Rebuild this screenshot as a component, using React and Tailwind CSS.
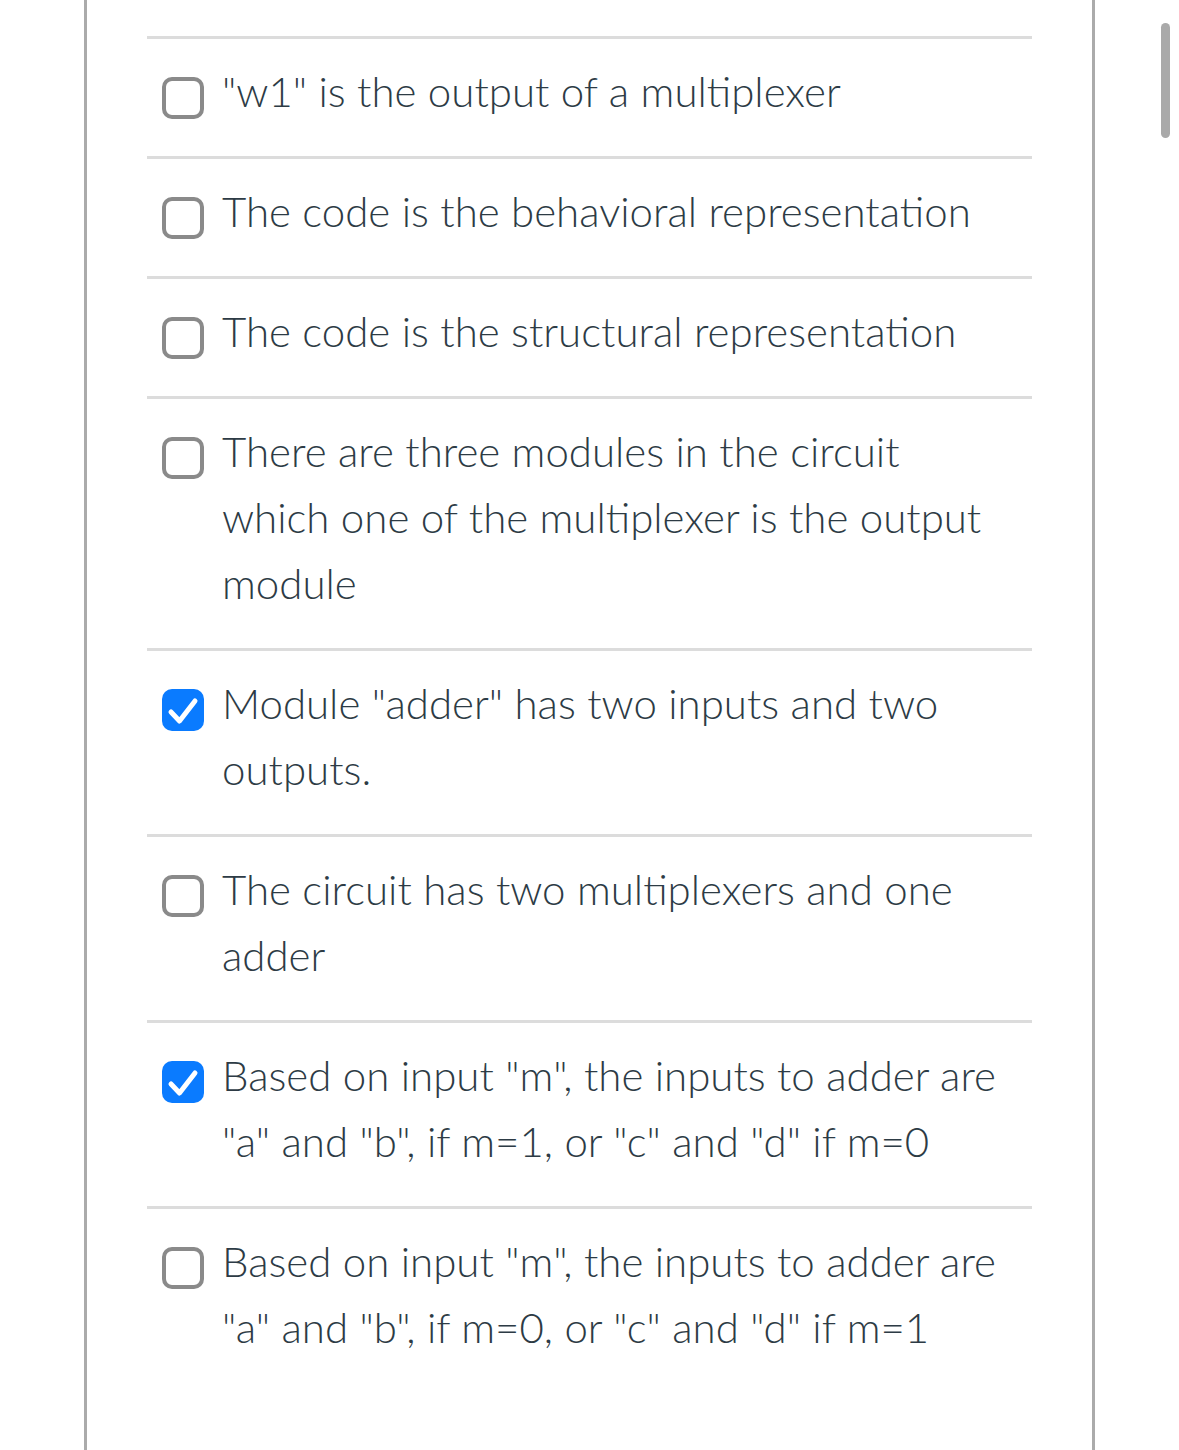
const options = [
  { text: '"w1" is the output of a multiplexer', checked: false },
  { text: "The code is the behavioral representation", checked: false },
  { text: "The code is the structural representation", checked: false },
  { text: "There are three modules in the circuit which one of the multiplexer is the output module", checked: false },
  { text: 'Module "adder" has two inputs and two outputs.', checked: true },
  { text: "The circuit has two multiplexers and one adder", checked: false },
  { text: 'Based on input "m", the inputs to adder are "a" and "b", if m=1, or "c" and "d" if m=0', checked: true },
  { text: 'Based on input "m", the inputs to adder are "a" and "b", if m=0, or "c" and "d" if m=1', checked: false },
];

const Box = ({ checked }) =>
  checked ? (
    <span className="flex h-[42px] w-[42px] shrink-0 items-center justify-center rounded-[10px] bg-[#0a7bff]">
      <svg width="42" height="42" viewBox="0 0 42 42" fill="none">
        <path d="M9 23 L17.5 32 L33 12" stroke="white" strokeWidth="5" strokeLinecap="round" strokeLinejoin="round" />
      </svg>
    </span>
  ) : (
    <span className="h-[42px] w-[42px] shrink-0 rounded-[10px] border-[4px] border-[#8a8a8a] bg-white" />
  );

export default function App() {
  return (
    <div
      className="relative h-[1450px] w-[1179px] overflow-hidden bg-white"
      style={{ fontFamily: "Lato, 'Open Sans', sans-serif" }}
    >
      <div className="ml-[84px] h-full w-[1011px] border-x-[3px] border-[#ababab] px-[60px] pt-[36px]">
        {options.map((o, i) => (
          <div key={i} className="flex gap-[18px] border-t-[3px] border-[#dcdcdc] pb-[25px] pl-[15px] pt-[26px] pr-[20px]">
            <div className="flex h-[66px] items-center">
              <Box checked={o.checked} />
            </div>
            <p className="-mt-[7px] mb-[7px] text-[42px] font-light leading-[66px] text-[#2d3b45]">{o.text}</p>
          </div>
        ))}
      </div>
      <div className="absolute left-[1161px] top-[23px] h-[115px] w-[9px] rounded-full bg-[#a9a9a9]" />
    </div>
  );
}
